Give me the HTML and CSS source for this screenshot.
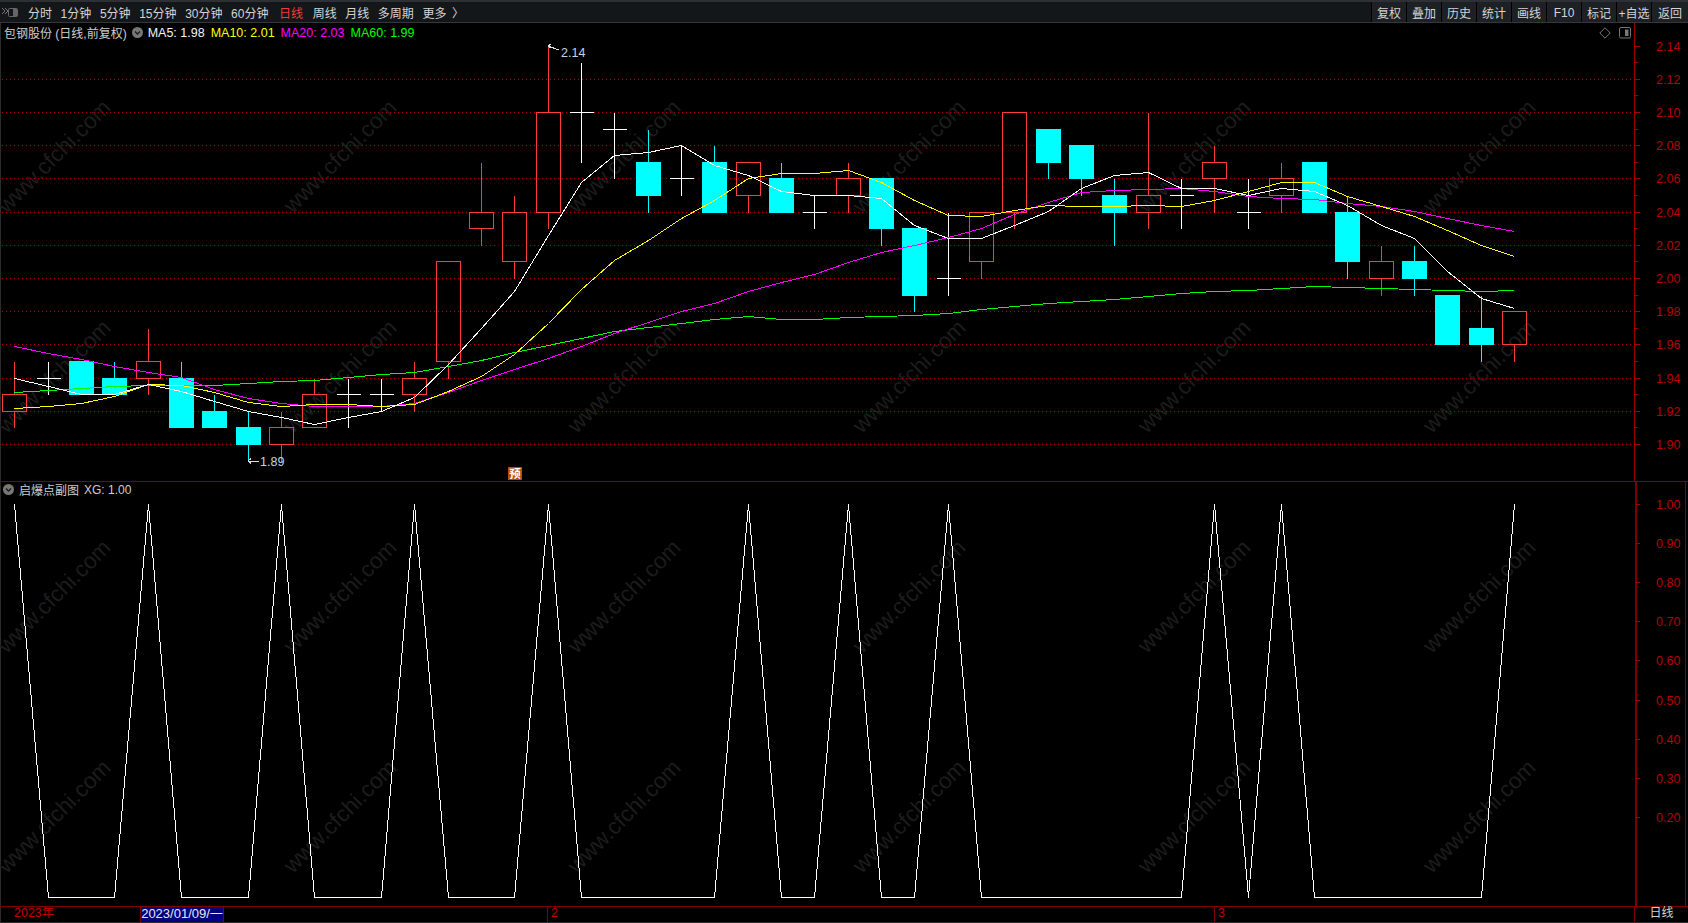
FILE: index.html
```html
<!DOCTYPE html>
<html lang="zh-CN">
<head>
<meta charset="utf-8">
<title>包钢股份 日线</title>
<link rel="stylesheet" href="styles.css">
</head>
<body>
<div class="app">
  <header class="toolbar">
    <svg class="tool-icon" width="16" height="11" viewBox="0 0 16 11"><path class="tool-icon-x" d="M0 1l3 3-3 3M3 1l3 3-3 3"/><rect class="tool-icon-box" x="6.5" y="1.5" width="9" height="8" rx="1"/><rect class="tool-icon-fill" x="11" y="2" width="4" height="7"/></svg>
    <nav class="tabs">
      <span>分时</span><span>1分钟</span><span>5分钟</span><span>15分钟</span><span>30分钟</span><span>60分钟</span>
      <span class="tab-active">日线</span><span>周线</span><span>月线</span><span>多周期</span><span>更多</span><span class="tab-more">〉</span>
    </nav>
    <div class="actions">
      <span>复权</span><span>叠加</span><span>历史</span><span>统计</span><span>画线</span><span class="action-latin">F10</span><span>标记</span><span>+自选</span><span class="action-last">返回</span>
    </div>
  </header>

  <section class="pane pane-main">
    <svg id="main-chart" class="plot" width="1688" height="458" viewBox="0 23 1688 458"></svg>
    <div class="legend legend-main">
      <span class="legend-name">包钢股份 (日线,前复权)</span>
      <svg class="chevron" width="11" height="11" viewBox="0 0 11 11"><circle class="chevron-disc" cx="5.5" cy="5.5" r="5.5"/><path class="chevron-mark" d="M3 4.5l2.5 2.5 2.5-2.5"/></svg>
      <span class="ma ma5">MA5: 1.98</span>
      <span class="ma ma10">MA10: 2.01</span>
      <span class="ma ma20">MA20: 2.03</span>
      <span class="ma ma60">MA60: 1.99</span>
      <span class="legend-tools">
        <svg width="12" height="12" viewBox="0 0 12 12"><path class="tool-stroke" d="M6 .8L11.2 6 6 11.2.8 6z"/></svg>
        <svg width="12" height="12" viewBox="0 0 12 12"><rect class="tool-stroke" x=".5" y=".5" width="11" height="10.5" rx="1.5"/><rect class="tool-fill" x="6" y="2.5" width="3.5" height="6.5"/></svg>
      </span>
    </div>
  </section>

  <section class="pane pane-sub">
    <svg id="sub-chart" class="plot" width="1688" height="425" viewBox="0 481 1688 425"></svg>
    <div class="legend legend-sub">
      <svg class="chevron" width="11" height="11" viewBox="0 0 11 11"><circle class="chevron-disc" cx="5.5" cy="5.5" r="5.5"/><path class="chevron-mark" d="M3 4.5l2.5 2.5 2.5-2.5"/></svg>
      <span class="legend-name">启爆点副图</span>
      <span class="legend-name">XG: 1.00</span>
    </div>
  </section>

  <footer class="timebar">
    <span class="time-year">2023年</span>
    <span class="time-cursor">2023/01/09/一</span>
    <span class="time-mark time-mark-feb">2</span>
    <span class="time-mark time-mark-mar">3</span>
    <span class="time-period">日线</span>
  </footer>
</div>
<script src="chart.js"></script>
</body>
</html>
```
FILE: styles.css
```css
* { box-sizing: border-box; }
html, body { margin: 0; height: 100%; background: #000; overflow: hidden; }
body { font-family: "Liberation Sans", "Noto Sans CJK SC", sans-serif; font-size: 12px; color: #d4d4d4; }
.app { display: flex; flex-direction: column; width: 1688px; height: 923px; border-left: 1px solid #2c2c2c; }

.toolbar { display: flex; align-items: center; flex: none; height: 23px; margin-left: -1px; background: #14171a; border-top: 2px solid #2d3035; border-bottom: 1px solid #33363a; }
.tool-icon { flex: none; margin: 0 10px 0 2px; }
.tool-icon-x { fill: none; stroke: #777; stroke-width: 1; }
.tool-icon-box { fill: none; stroke: #666; }
.tool-icon-fill { fill: #666; }
.tabs { display: flex; gap: 8.6px; }
.tab-active { color: #f03c3c; margin: 0 1px 0 2px; }
.tab-more { margin-left: -3px; }
.actions { display: flex; margin-left: auto; height: 20px; }
.actions span { display: flex; align-items: center; justify-content: center; width: 35px; background: #1d2025; border-left: 1px solid #000; }
.actions .action-latin { padding-top: 2px; }
.actions .action-last { width: 37px; }

.pane { display: grid; flex: none; }
.pane > * { grid-area: 1 / 1; }
.pane-main { height: 458px; margin-left: -1px; }
.pane-sub { height: 425px; margin-left: -1px; }
.plot { display: block; }
.legend { display: flex; align-items: center; align-self: start; height: 19px; white-space: nowrap; }
.legend-main { padding: 0 57px 0 4px; }
.legend-main .chevron { margin: 0 5px 0 5px; }
.legend-sub { padding: 0 0 0 3px; margin-top: -1px; }
.legend-sub .chevron { margin-right: 5px; }
.legend-sub .legend-name + .legend-name { margin-left: 5px; }
.legend-name { color: #cfcfcf; }
.chevron-disc { fill: #777; }
.chevron-mark { fill: none; stroke: #1c1c1c; stroke-width: 1.4; }
.ma { font-size: 12.5px; margin-right: 6px; }
.ma5 { color: #f4f4f4; }
.ma10 { color: #ffff00; }
.ma20 { color: #ff00ff; }
.ma60 { color: #00ff00; }
.legend-tools { display: flex; gap: 8px; margin-left: auto; }
.tool-stroke { fill: none; stroke: #777; }
.tool-fill { fill: #777; }

.timebar { display: grid; grid-template-columns: 140px 84px 323px 667px 420px 54px; grid-template-rows: 15px; flex: none; height: 17px; margin-left: -1px; line-height: 13px; border-top: 1px solid #800000; border-bottom: 1px solid #2a2a2a; color: #c00000; }
.timebar > * { display: flex; align-items: center; padding-bottom: 2px; }
.time-year { padding-left: 14px; font-size: 12.5px; }
.time-cursor { justify-content: center; background: #000080; color: #e8e8e8; font-size: 13px; border: 1px solid #800000; border-width: 0 1px; }
.time-mark { padding-left: 3px; border-left: 1px solid #800000; font-size: 12.5px; }
.time-mark-feb { grid-column: 4; }
.time-mark-mar { grid-column: 5; }
.time-period { grid-column: 6; justify-content: center; color: #d4d4d4; border-left: 1px solid #800000; }

.watermark { fill: #1c1c1c; font-size: 22.5px; font-family: "Liberation Sans", sans-serif; text-anchor: end; }
.grid-line { stroke: #a00000; stroke-dasharray: 1 3; }
.axis-main { stroke: #a00000; }
.axis-sub { stroke: #800000; }
.axis-tick { stroke: #a00000; }
.axis-label { fill: #b80000; font-size: 12.5px; dominant-baseline: central; }
.candle-red { stroke: #ff3c3c; fill: none; }
.candle-cyan { stroke: #00ffff; fill: none; }
.candle-cyan-body { fill: #00ffff; }
.candle-flat { stroke: #ffffff; fill: none; }
.line { fill: none; stroke-width: 1; }
.line-ma5 { stroke: #ffffff; }
.line-ma10 { stroke: #ffff00; }
.line-ma20 { stroke: #ff00ff; }
.line-ma60 { stroke: #00ff00; }
.line-xg { stroke: #ffffff; }
.pane-rule { stroke: #800000; }
.note-arrow { stroke: #e0e0e0; fill: none; }
.note-text { fill: #c4d4e4; font-size: 12.5px; dominant-baseline: central; }
.tag-box { fill: #b84a0a; }
.tag-text { fill: #ffffff; font-size: 11.5px; font-weight: 700; text-anchor: middle; dominant-baseline: central; }
```
FILE: chart.js
```js
var NS = 'http://www.w3.org/2000/svg';
function el(parent, tag, attrs, text) {
  var n = document.createElementNS(NS, tag);
  for (var k in attrs) n.setAttribute(k, attrs[k]);
  n.setAttribute('shape-rendering', tag === 'text' ? 'auto' : 'crispEdges');
  if (text) n.textContent = text;
  parent.appendChild(n);
  return n;
}
function X(i) { return Math.round(14.3 + i * 33.33) + 0.5; }
function Y(p) { return Math.round(112 + (2.1 - p) * 1660) + 0.5; }

/* kind, body top, body bottom, high, low (prices in cents) */
var C = [
 ['r',193,192,195,191],['w',194,194,195,193],['c',195,193,195,193],['c',194,193,195,193],
 ['r',195,194,197,193],['c',194,191,195,191],['c',192,191,193,191],['c',191,190,192,189],
 ['r',191,190,192,189],['r',193,191,194,191],['w',193,193,194,191],['w',193,193,194,192],
 ['r',194,193,195,192],['r',201,195,201,194],['r',204,203,207,202],['r',204,201,205,200],
 ['r',210,204,214,203],['w',210,210,213,207],['w',209,209,210,206],['c',207,205,209,204],
 ['w',206,206,208,205],['c',207,204,208,204],['r',207,205,207,204],['c',206,204,207,204],
 ['w',204,204,205,203],['r',206,205,207,204],['c',206,203,206,202],['c',203,199,203,198],
 ['w',200,200,204,199],['r',204,201,204,200],['r',210,204,210,203],['c',209,207,209,206],
 ['c',208,206,208,205],['c',205,204,206,202],['r',205,204,210,203],['w',205,205,206,203],
 ['r',207,206,208,204],['w',204,204,206,203],['r',206,205,207,204],['c',207,204,207,204],
 ['c',204,201,205,200],['r',201,200,202,199],['c',201,200,202,199],['c',199,196,199,196],
 ['c',197,196,199,195],['r',198,196,198,195]
];
var closes = C.map(function (c) { return c[0] === 'c' ? c[2] : c[1]; });
function maY(n, head) {
  return C.map(function (_, i) {
    if (i < head.length) return head[i];
    var s = 0;
    for (var j = i - n + 1; j <= i; j++) s += closes[j];
    return 112.3 + (2.1 - s / n / 100) * 1660;
  });
}
var ma5 = maY(5, [378.3, 386, 394, 394]);
var ma10 = maY(10, [408.3, 406.7, 403.3, 396.7, 384.3, 385, 392.7, 402.7, 406]);
var ma20 = maY(20, [346, 353.3, 359.3, 366, 372.7, 377.7, 389.3, 398.3, 403.3, 406, 406.3, 406.7, 403.3, 392, 380.7, 369.3, 358.7, 346.7, 333]);
var ma60 = [392.7, 390, 388.3, 386.7, 385.7, 385, 385, 383.3, 381.7, 380, 377.3, 374.3, 372.3, 366.7, 360, 352.7,
  345, 338.5, 331.5, 327, 323.5, 319.5, 316.5, 319, 319.3, 317.5, 316, 315, 313, 309, 306.5, 303.5, 301, 299, 296.5,
  293.5, 291, 290, 288, 286.7, 287, 288, 289, 290.5, 291, 290.3];
var peaks = [0, 4, 8, 12, 16, 22, 25, 28, 36, 38, 45];
var xg = C.map(function (_, i) { return peaks.indexOf(i) >= 0 ? 504 : 897; });

function watermarks(svg, rows) {
  var xs = [110, 396, 680, 965, 1250, 1535];
  rows.forEach(function (y) {
    xs.forEach(function (x) {
      var px = x + 2, py = y + 9;
      el(svg, 'text', { 'class': 'watermark', x: px, y: py, transform: 'rotate(-45 ' + px + ' ' + py + ')' }, 'www.cfchi.com');
    });
  });
}
function line(svg, cls, ys) {
  var pts = ys.map(function (y, i) { return X(i) + ',' + (Math.floor(y) + 0.5); }).join(' ');
  el(svg, 'polyline', { 'class': 'line ' + cls, points: pts });
}
function seg(svg, cls, x1, y1, x2, y2) {
  el(svg, 'line', { 'class': cls, x1: x1, y1: y1, x2: x2, y2: y2 });
}

/* main pane */
var m = document.getElementById('main-chart');
watermarks(m, [100, 320]);
for (var c = 212; c >= 190; c -= 2) seg(m, 'grid-line', 2, Y(c / 100), 1634, Y(c / 100));
C.forEach(function (c, i) {
  var x = X(i), top = Y(c[1] / 100), bot = Y(c[2] / 100), hi = Y(c[3] / 100), lo = Y(c[4] / 100);
  if (c[0] === 'w') {
    seg(m, 'candle-flat', x, hi, x, lo);
    seg(m, 'candle-flat', x - 12, top, x + 12, top);
    return;
  }
  var cls = c[0] === 'r' ? 'candle-red' : 'candle-cyan';
  if (hi < top) seg(m, cls, x, hi, x, top);
  if (lo > bot) seg(m, cls, x, bot, x, lo);
  if (c[0] === 'r') el(m, 'rect', { 'class': cls, x: x - 12, y: top, width: 24, height: bot - top });
  else el(m, 'rect', { 'class': 'candle-cyan-body', x: x - 12.5, y: top - 0.5, width: 25, height: bot - top + 1 });
});
line(m, 'line-ma60', ma60);
line(m, 'line-ma20', ma20);
line(m, 'line-ma10', ma10);
line(m, 'line-ma5', ma5);
seg(m, 'axis-main', 1634.5, 23, 1634.5, 481);
for (var t = 214; t >= 190; t -= 1) {
  var ty = Y(t / 100), major = t % 2 === 0;
  seg(m, 'axis-tick', 1635, ty, major ? 1640 : 1638, ty);
  if (major) el(m, 'text', { 'class': 'axis-label', x: 1656, y: ty }, (t / 100).toFixed(2));
}
el(m, 'path', { 'class': 'note-arrow', d: 'M551 44L548 46L551 48M548 46L559 50' });
el(m, 'text', { 'class': 'note-text', x: 561, y: 52.5 }, '2.14');
el(m, 'path', { 'class': 'note-arrow', d: 'M251 458.5L248 461L251 463.5M248 461H259' });
el(m, 'text', { 'class': 'note-text', x: 260, y: 461.5 }, '1.89');
el(m, 'rect', { 'class': 'tag-box', x: 508, y: 467, width: 14, height: 13 });
el(m, 'text', { 'class': 'tag-text', x: 515, y: 473.5 }, '预');

/* indicator pane */
var s = document.getElementById('sub-chart');
watermarks(s, [540, 760]);
line(s, 'line-xg', xg);
seg(s, 'pane-rule', 0, 481.5, 1688, 481.5);
seg(s, 'axis-sub', 1635, 481, 1635, 906);
seg(s, 'axis-sub', 1636, 481, 1636, 906);
seg(s, 'axis-sub', 1685.5, 481, 1685.5, 906);
for (var v = 100; v >= 20; v -= 10) {
  var vy = Math.round(503.5 + (100 - v) * 3.92) + 0.5;
  seg(s, 'axis-tick', 1636, vy, 1640, vy);
  el(s, 'text', { 'class': 'axis-label', x: 1656, y: vy }, (v / 100).toFixed(2));
}
```
